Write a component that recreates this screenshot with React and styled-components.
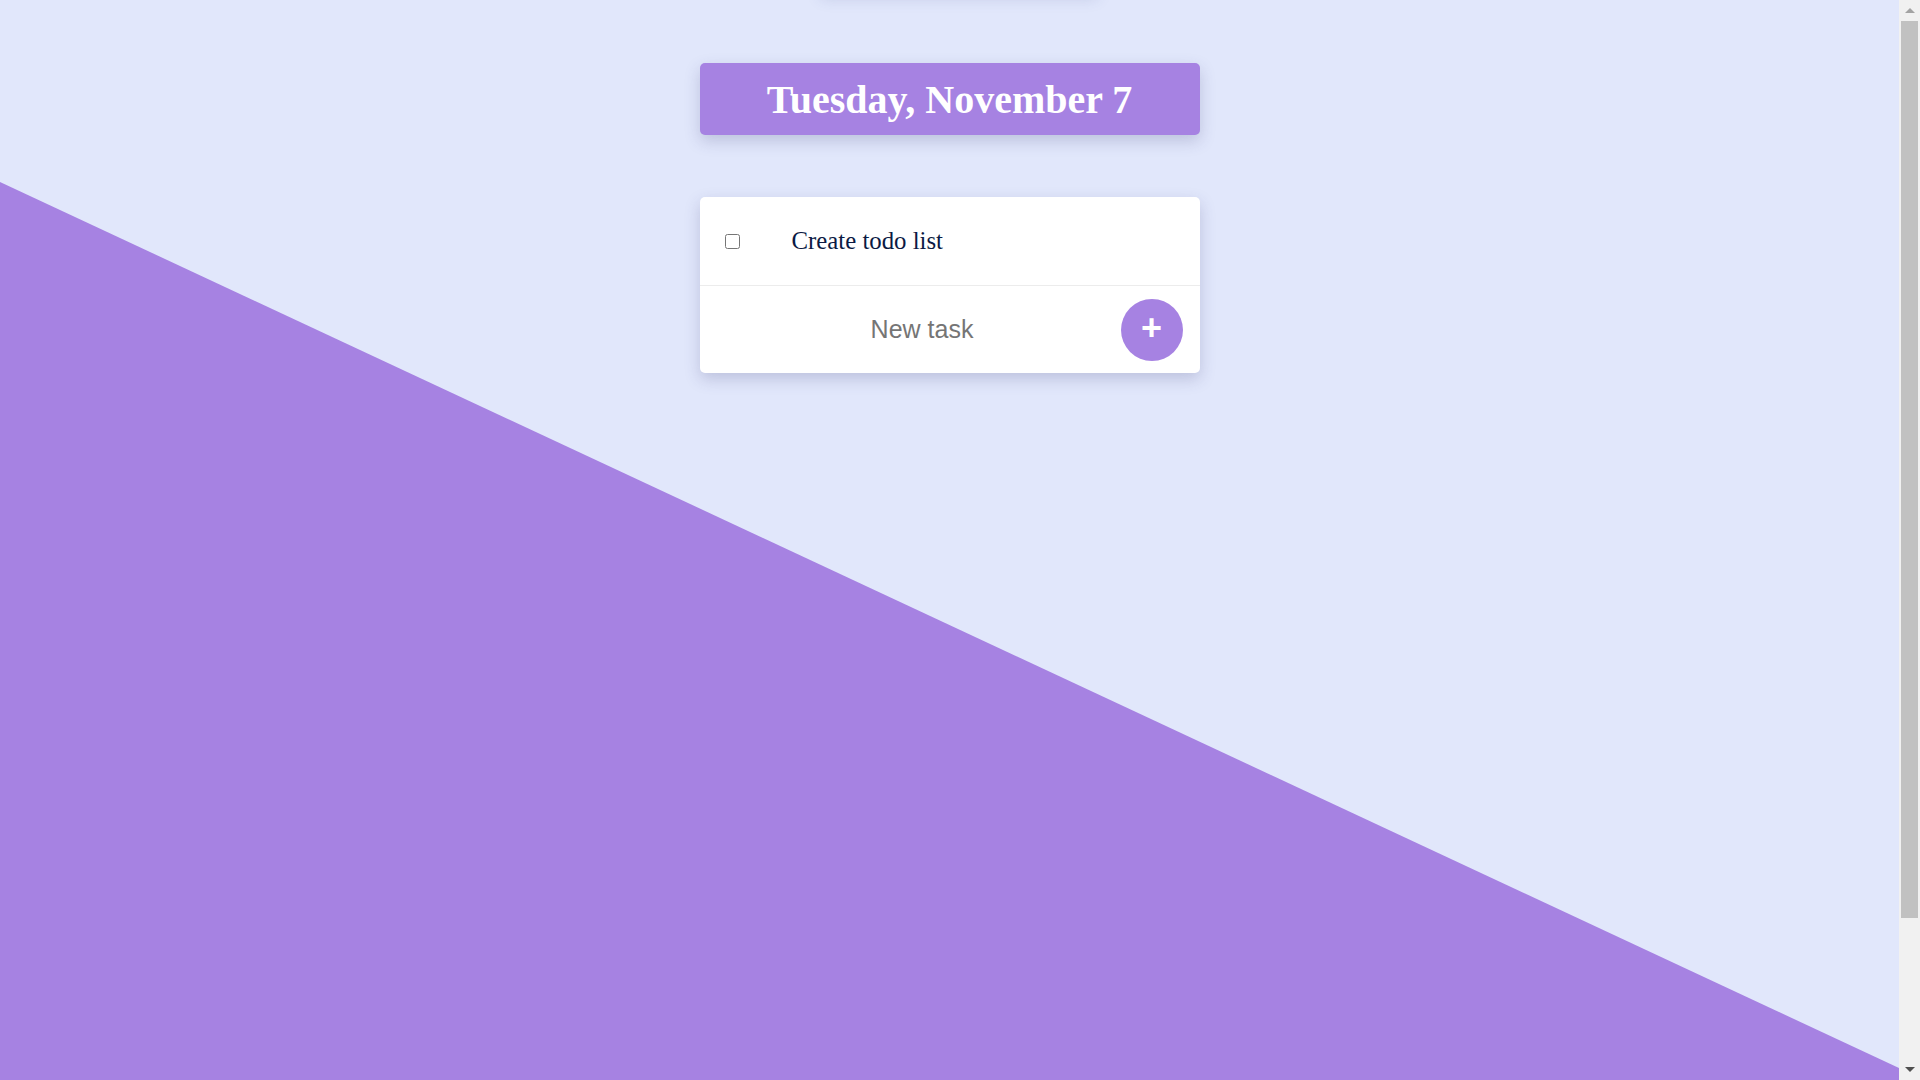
import React, { useState } from 'react'
import styled, { createGlobalStyle } from 'styled-components'

const GlobalStyle = createGlobalStyle`
    html, body {
        margin: 0;
        padding: 0;
    }
    body {
        background: #e1e7fb;
        font-family: "Liberation Serif", "Times New Roman", serif;
    }
`

function App() {
    const [tasks, setTasks] = useState([{ id: 1, text: 'Create todo list', done: false }])
    const [draft, setDraft] = useState('')

    const toggle = (id) =>
        setTasks(tasks.map((t) => (t.id === id ? { ...t, done: !t.done } : t)))

    const add = () => {
        if (!draft.trim()) return
        setTasks([...tasks, { id: Date.now(), text: draft.trim(), done: false }])
        setDraft('')
    }

    return (
        <Page>
            <GlobalStyle />
            <Toast />
            <DateBanner>Tuesday, November 7</DateBanner>
            <Card>
                {tasks.map((t) => (
                    <TaskRow key={t.id}>
                        <Check type="checkbox" checked={t.done} onChange={() => toggle(t.id)} />
                        <TaskText $done={t.done}>{t.text}</TaskText>
                    </TaskRow>
                ))}
                <InputRow>
                    <TaskInput
                        placeholder="New task"
                        value={draft}
                        onChange={(e) => setDraft(e.target.value)}
                        onKeyDown={(e) => e.key === 'Enter' && add()}
                    />
                    <AddButton onClick={add}>+</AddButton>
                </InputRow>
            </Card>
            <ScrollTrack>
                <Arrow $dir="up" />
                <Thumb />
                <Arrow $dir="down" />
            </ScrollTrack>
        </Page>
    )
}

export default App

const Page = styled.div`
    position: relative;
    min-height: 1260px;
    margin-right: 21px;
    display: flex;
    flex-direction: column;
    align-items: center;
    padding-top: 63px;
    box-sizing: border-box;
    overflow: hidden;

    &:before {
        content: "";
        position: absolute;
        top: 0;
        left: 0;
        right: 0;
        bottom: 0;
        background: #a682e2;
        clip-path: polygon(0 182px, 100% 1068px, 100% 100%, 0 100%);
        z-index: 0;
    }
`

const Toast = styled.div`
    position: absolute;
    top: -60px;
    left: 50%;
    transform: translateX(calc(-50% + 9px));
    width: 276px;
    height: 56px;
    background: #e1e7fb;
    box-shadow: 0 2px 14px rgba(60, 70, 140, 0.18);
    z-index: 2;
`

const DateBanner = styled.h1`
    position: relative;
    z-index: 1;
    margin: 0;
    width: 500px;
    height: 72px;
    display: flex;
    align-items: center;
    justify-content: center;
    background: #a682e2;
    color: #ffffff;
    font-family: "Liberation Serif", "Times New Roman", serif;
    font-size: 40px;
    font-weight: bold;
    border-radius: 5px;
    box-shadow: 0 6px 16px rgba(60, 60, 120, 0.22);
`

const Card = styled.div`
    position: relative;
    z-index: 1;
    margin-top: 62px;
    width: 500px;
    background: #ffffff;
    border-radius: 5px;
    box-shadow: 0 6px 16px rgba(60, 60, 120, 0.22);
    overflow: hidden;
`

const TaskRow = styled.div`
    display: flex;
    align-items: center;
    height: 89px;
    padding-left: 25px;
    border-bottom: 1px solid #ececec;
    box-sizing: border-box;
`

const Check = styled.input`
    width: 15px;
    height: 15px;
    margin: 0;
    cursor: pointer;
`

const TaskText = styled.span`
    margin-left: 52px;
    font-family: "Liberation Serif", "Times New Roman", serif;
    font-size: 24.8px;
    color: #0b1a44;
    text-decoration: ${(p) => (p.$done ? 'line-through' : 'none')};
`

const InputRow = styled.div`
    display: flex;
    align-items: center;
    height: 87px;
    padding: 0 17px 0 24px;
`

const TaskInput = styled.input`
    flex: 1;
    min-width: 0;
    border: none;
    outline: none;
    background: transparent;
    text-align: center;
    font-family: "Liberation Sans", Arial, sans-serif;
    font-size: 25px;
    color: #333;

    &::placeholder {
        color: #757575;
    }
`

const AddButton = styled.button`
    width: 62px;
    height: 62px;
    border-radius: 50%;
    border: none;
    background: #a682e2;
    color: #ffffff;
    font-family: "Liberation Sans", Arial, sans-serif;
    font-size: 36px;
    font-weight: bold;
    line-height: 1;
    padding: 0 0 3px;
    display: flex;
    align-items: center;
    justify-content: center;
    cursor: pointer;
`

/* stand-in for the browser's vertical scrollbar */
const ScrollTrack = styled.div`
    position: fixed;
    top: 0;
    right: 0;
    width: 21px;
    height: 100vh;
    background: #f1f1f1;
    display: flex;
    flex-direction: column;
    align-items: center;
    z-index: 5;
`

const Thumb = styled.div`
    width: 17px;
    height: 897px;
    background: #c1c1c1;
`

const Arrow = styled.div`
    height: 21px;
    width: 100%;
    display: flex;
    justify-content: center;
    align-items: center;
    margin-top: ${(p) => (p.$dir === 'down' ? 'auto' : '0')};

    &:before {
        content: "";
        width: 0;
        height: 0;
        border-left: 5px solid transparent;
        border-right: 5px solid transparent;
        ${(p) =>
            p.$dir === 'up'
                ? 'border-bottom: 5px solid #a3a3a3;'
                : 'border-top: 5px solid #505050;'}
    }
`
